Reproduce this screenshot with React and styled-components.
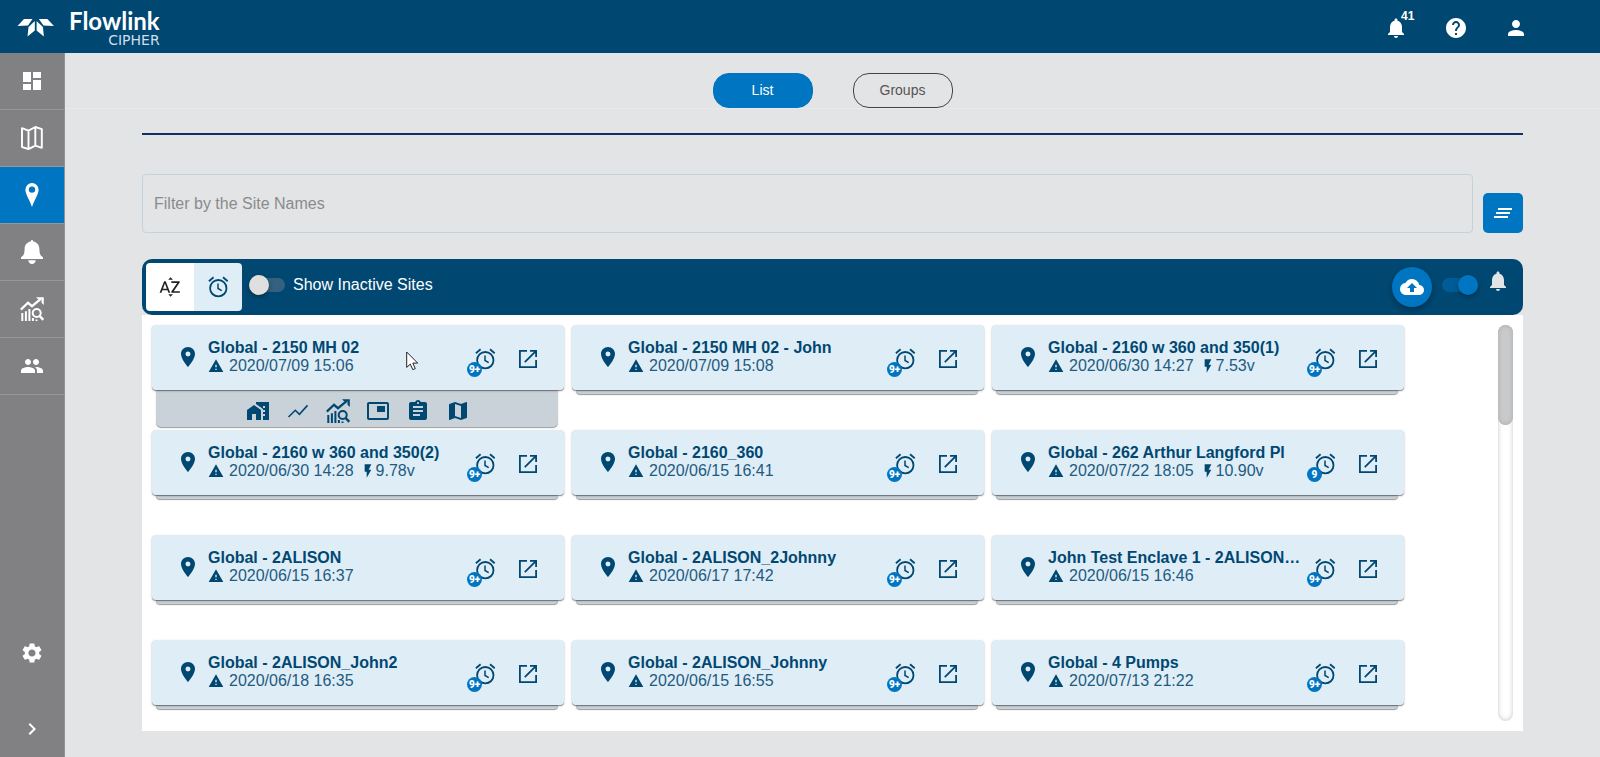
import React from 'react';
import styled, { createGlobalStyle, css } from 'styled-components';
import {
  MdAssignment, MdChevronRight, MdClearAll, MdCloudUpload, MdDashboard, MdHelp,
  MdLocationOn, MdMap, MdNotifications, MdPeople, MdPerson,
  MdPictureInPicture, MdSettings, MdSortByAlpha,
} from 'react-icons/md';

const color = {
  navy: '#004872',
  blue: '#0076c2',
  page: '#e3e4e6',
  side: '#818183',
  card: '#dfedf7',
  drawer: '#c8d2d8',
};

const GlobalStyle = createGlobalStyle`
  *, *::before, *::after { box-sizing: border-box; }
  body { margin: 0; background: ${color.page}; font-family: "Liberation Sans", Arial, sans-serif; font-size: 16px; }
  button, input { font: inherit; }
  svg { display: block; flex: none; }
`;

/* ---------- icons ---------- */

const AlarmIcon = () => (
  <svg width="24" height="24" viewBox="0 0 24 24" fill="none" stroke="currentColor" strokeWidth="1.8">
    <circle cx="12.3" cy="13.2" r="8.2" />
    <path d="M12 8.500v5l3.700 2.200" strokeWidth="1.500" />
    <path d="M2.900 6.200L7.600 2.300M21.700 6.200L17 2.300" />
  </svg>
);

const OpenIcon = () => (
  <svg width="24" height="24" viewBox="0 0 24 24" fill="none" stroke="currentColor" strokeWidth="1.8">
    <path d="M11 3.900H3.900v16.200h16.200V13" />
    <path d="M14 3.900h6.100V10M20.100 3.900L8.800 15.200" />
  </svg>
);

const AnalyticsIcon = () => (
  <svg width="24" height="24" viewBox="0 0 24 24" fill="none" stroke="currentColor">
    <path d="M.8 12.600L8 5.800l4 3.400 8.600-7" strokeWidth="2.200" />
    <path d="M16 .2h7.800V8l-2.300-2.300V2.500h-3.200z" fill="currentColor" stroke="none" />
    <path d="M2.300 16v8M5.900 14.300V24M9.400 12v12" strokeWidth="2" />
    <path d="M12.900 21v3M16.500 22.400V24" strokeWidth="2" />
    <circle cx="16.7" cy="16" r="4" strokeWidth="2" />
    <path d="M19.600 19l3.700 3.800" strokeWidth="2.400" />
  </svg>
);

const MapOutlineIcon = () => (
  <svg width="22" height="24" viewBox="0 0 22 24" fill="none" stroke="currentColor" strokeWidth="1.9" strokeLinejoin="round">
    <path d="M1 2.200l6.500 2.500L14.300 1l6.500 2.200v18.600l-6.500-2.200-6.800 3.500L1 21zM7.500 4.700v18.400M14.300 1v18.600" />
  </svg>
);

const SitePinIcon = () => (
  <svg width="14" height="24" viewBox="0 0 14 24" fill="currentColor" fillRule="evenodd">
    <path d="M7 0a6.600 6.600 0 0 0-6.600 6.600C.4 11.500 5.100 18 7 24c1.900-6 6.600-12.500 6.600-17.400A6.600 6.600 0 0 0 7 0zm0 3.400a3.200 3.200 0 1 1 0 6.400 3.200 3.200 0 0 1 0-6.400z" />
  </svg>
);

const AlertBellIcon = () => (
  <svg width="22" height="24" viewBox="0 0 22 24" fill="currentColor">
    <path d="M11 0c-.8 0-1.300.6-1.300 1.500C5.800 2.200 3.700 5 3.600 9c-.1 4.500-.6 6.400-3.600 8.200V19h22v-1.800c-3-1.800-3.500-3.700-3.600-8.200-.1-4-2.200-6.800-6.100-7.500C12.300.6 11.800 0 11 0zM7.300 20.300c.1 2.200 1.800 3.700 3.700 3.700s3.600-1.500 3.700-3.700z" />
  </svg>
);

const WarningIcon = () => (
  <svg width="16" height="16" viewBox="0 0 24 24" fill="currentColor">
    <path d="M1 21h22L12 2 1 21zm12-3h-2v-2h2v2zm0-4h-2v-4h2v4z" />
  </svg>
);

const BoltIcon = () => (
  <svg width="16" height="16" viewBox="0 0 24 24" fill="currentColor">
    <path d="M7 2v11h3v9l7-12h-4l4-8z" />
  </svg>
);

const HomeWorkIcon = () => (
  <svg width="24" height="24" viewBox="0 0 24 24" fill="currentColor" fillRule="evenodd">
    <path d="M1 11v10h5v-6h4v6h5V11L8 6z" />
    <path d="M10 3v1.970l7 5V11h2v2h-2v2h2v2h-2v4h6V3H10zm9 6h-2V7h2v2z" />
  </svg>
);

const TrendIcon = () => (
  <svg width="24" height="24" viewBox="0 0 24 24" fill="none" stroke="currentColor" strokeWidth="1.6">
    <path d="M2.500 18l6.800-6.700 4.100 4L21.500 6.400" />
  </svg>
);

const EmblemIcon = () => (
  <svg width="38" height="20" viewBox="0 0 38 20" fill="#fff">
    <path d="M.5 9L7 2h8.500L11 8.500z" />
    <path d="M36.900 9l-6.500-7h-8.500l4.500 6.500z" />
    <path d="M10.500 19.500l1-9.500 6.300-6v9.500z" />
    <path d="M26.900 19.500l-1-9.500-6.300-6v9.500z" />
  </svg>
);

const PointerIcon = () => (
  <svg width="13" height="20" viewBox="0 0 13 20" fill="#fff" stroke="#222" strokeWidth="1">
    <path d="M.7 1v15.400l3.600-3.300 2.500 5.600 2.500-1.100-2.500-5.500h4.900z" />
  </svg>
);

/* ---------- shell ---------- */

const Shell = styled.div`
  display: flex;
  flex-direction: column;
  height: 100vh;
  min-height: 500px;
`;

const IconButton = styled.button`
  display: inline-flex;
  align-items: center;
  justify-content: center;
  flex: none;
  width: 24px;
  height: 24px;
  padding: 0;
  border: 0;
  background: none;
  color: ${(p) => p.$tone || color.navy};
  position: relative;
  cursor: pointer;
`;

const Header = styled.header`
  display: flex;
  align-items: center;
  justify-content: space-between;
  flex: none;
  height: 53px;
  padding: 0 72px 0 17px;
  background: ${color.navy};
  color: #fff;
`;

const Brand = styled.a`
  display: flex;
  align-items: center;
  gap: 14px;
  color: #fff;
  text-decoration: none;
`;

const Wordmark = styled.span`
  display: flex;
  flex-direction: column;
  align-items: flex-end;
`;

const BrandName = styled.span`
  font: bold 24px/26px Lato, "Liberation Sans", sans-serif;
`;

const BrandSub = styled.span`
  font: 14px/12px "DejaVu Sans", sans-serif;
  color: #cfdfea;
`;

const HeaderActions = styled.nav`
  display: flex;
  gap: 36px;
  padding-top: 3px;
`;

const AlertCount = styled.span`
  position: absolute;
  left: 17px;
  top: -6px;
  font: bold 12px/12px "Liberation Sans", sans-serif;
`;

const Body = styled.div`
  display: flex;
  flex: 1;
  min-height: 0;
`;

const Sidebar = styled.nav`
  display: flex;
  flex-direction: column;
  flex: none;
  width: 65px;
  background: ${color.side};
  border-right: 1px solid #929294;
`;

const SideLink = styled.a`
  display: flex;
  align-items: center;
  justify-content: center;
  height: 57px;
  color: #fff;
  background: ${(p) => (p.$active ? color.blue : 'transparent')};
  border-bottom: ${(p) => (p.$plain ? '0' : '1px solid #979799')};
`;

const SideFooter = styled.div`
  display: flex;
  flex-direction: column;
  gap: 19px;
  margin-top: auto;
`;

const Main = styled.main`
  display: flex;
  flex-direction: column;
  flex: 1;
  min-width: 0;
`;

const Tabs = styled.div`
  display: flex;
  justify-content: center;
  gap: 40px;
  padding-top: 20px;
  border-bottom: 1px solid #e8e9eb;
`;

const Tab = styled.button`
  width: 100px;
  height: 35px;
  padding: 0 0 2px;
  border-radius: 16px;
  font-size: 14px;
  cursor: pointer;
  ${(p) => (p.$active
    ? css`background: ${color.blue}; border: 1px solid ${color.blue}; color: #fff;`
    : css`background: transparent; border: 1px solid #444; color: #555;`)}
`;

const Content = styled.div`
  display: flex;
  flex-direction: column;
  flex: 1;
  min-height: 0;
  padding: 24px 77px 26px;
`;

const Rule = styled.hr`
  width: 100%;
  height: 2px;
  margin: 0 0 39px;
  border: 0;
  background: #0f3264;
`;

const FilterRow = styled.form`
  display: flex;
  align-items: flex-end;
  gap: 10px;
  margin-bottom: 26px;
`;

const FilterInput = styled.input`
  flex: 1;
  min-width: 0;
  height: 59px;
  padding: 0 11px;
  border: 1px solid #c6d2da;
  border-radius: 4px;
  background: transparent;
  color: #333;
  &::placeholder { color: #8a8b8d; opacity: 1; }
`;

const FilterButton = styled(IconButton)`
  width: 40px;
  height: 40px;
  border-radius: 5px;
  background: ${color.blue};
`;

/* ---------- toolbar ---------- */

const Toolbar = styled.div`
  display: flex;
  align-items: center;
  justify-content: space-between;
  flex: none;
  height: 56px;
  padding: 0 13px 0 4px;
  border-radius: 10px;
  background: ${color.navy};
`;

const PanelFrame = styled.section`
  display: flex;
  flex-direction: column;
  flex: 1;
  min-height: 0;
  background: linear-gradient(${color.page} 56px, #fff 56px);
`;

const ToolGroup = styled.div`
  display: flex;
  align-items: center;
  gap: ${(p) => p.$gap}px;
`;

const SortGroup = styled.div`
  display: flex;
  border-radius: 4px;
  overflow: hidden;
`;

const SortButton = styled.button`
  display: flex;
  align-items: center;
  justify-content: center;
  width: 48px;
  height: 48px;
  padding: 0;
  border: 0;
  color: ${(p) => (p.$active ? color.navy : '#222')};
  background: ${(p) => (p.$active ? color.card : '#fff')};
  cursor: pointer;
`;

const Switch = styled.input.attrs({ type: 'checkbox' })`
  appearance: none;
  flex: none;
  display: flex;
  align-items: center;
  width: 36px;
  height: 14px;
  margin: 0;
  border-radius: 7px;
  background: #33617f;
  cursor: pointer;
  &::before {
    content: '';
    width: 20px;
    height: 20px;
    border-radius: 50%;
    background: #dfdfdf;
    box-shadow: 0 2px 5px rgba(0, 0, 0, 0.35);
  }
  &:checked { justify-content: flex-end; background: #005c97; }
  &:checked::before { background: ${color.blue}; }
`;

const SwitchLabel = styled.label`
  display: flex;
  align-items: center;
  gap: 8px;
  padding-bottom: 4px;
  color: #fff;
`;

const UploadButton = styled(IconButton)`
  width: 40px;
  height: 40px;
  border-radius: 50%;
  background: ${color.blue};
  box-shadow: 0 3px 6px rgba(0, 0, 0, 0.3);
`;

const BellSwitch = styled.label`
  display: flex;
  align-items: center;
  gap: 8px;
  padding-bottom: 4px;
  color: ${color.page};
  & > svg { margin-bottom: 8px; }
`;

/* ---------- site list ---------- */

const Panel = styled.div`
  display: flex;
  flex: 1;
  min-height: 0;
  padding: 0 10px 10px 0;
`;

const SiteGrid = styled.ul`
  display: grid;
  grid-template-columns: repeat(3, minmax(0, 1fr));
  grid-auto-rows: 103px;
  gap: 2px 8px;
  flex: 1;
  min-width: 0;
  margin: 0;
  padding: 10px 94px 0 10px;
  list-style: none;
  overflow-y: auto;
  scrollbar-width: none;
`;

const ScrollTrack = styled.div`
  flex: none;
  width: 15px;
  margin-top: 10px;
  border-radius: 8px;
  background: #fff;
  box-shadow: inset 0 0 5px #c4c4c4;
`;

const ScrollThumb = styled.div`
  height: 100px;
  border-radius: 8px;
  background: #c9cacc;
  box-shadow: inset 0 0 5px #aaabad;
`;

const Card = styled.article`
  display: flex;
  align-items: center;
  position: relative;
  z-index: 1;
  height: 65px;
  padding: 0 24px 2px;
  border-radius: 4px;
  background: ${color.card};
  color: ${color.navy};
  box-shadow: 0 1px 1px rgba(0, 0, 0, 0.4), 0 1px 3px rgba(0, 0, 0, 0.15);
`;

const Info = styled.div`
  flex: 1;
  min-width: 0;
  margin: 0 11px 0 8px;
`;

const SiteName = styled.h2`
  margin: 0;
  font-size: 16px;
  line-height: 18px;
  overflow: hidden;
  white-space: nowrap;
  text-overflow: ellipsis;
`;

const Reading = styled.div`
  display: flex;
  align-items: center;
  line-height: 18px;
  color: #1d5b81;
  & > svg { color: ${color.navy}; }
`;

const Stamp = styled.time`
  margin: 0 6px 0 5px;
`;

const CardActions = styled.div`
  display: flex;
  gap: 19px;
  padding-top: 5px;
`;

const Badge = styled.span`
  position: absolute;
  left: -6px;
  bottom: -6px;
  display: flex;
  align-items: center;
  justify-content: center;
  width: 15px;
  height: 15px;
  border-radius: 50%;
  background: ${color.blue};
  color: #fff;
  font: 900 10px/15px Roboto, "Liberation Sans", sans-serif;
`;

const Drawer = styled.div`
  display: flex;
  align-items: center;
  justify-content: center;
  gap: 16px;
  height: ${(p) => (p.$open ? 37 : 4)}px;
  margin: 0 6px 0 4px;
  padding: ${(p) => (p.$open ? '4px 0 0 2px' : 0)};
  border-radius: 0 0 5px 5px;
  background: ${color.drawer};
  box-shadow: 0 1px 1px rgba(0, 0, 0, 0.4);
`;

const Pointer = styled.div`
  position: fixed;
  left: 406px;
  top: 351px;
  z-index: 2;
  pointer-events: none;
`;

const sites = [
  { name: 'Global - 2150 MH 02', time: '2020/07/09 15:06', open: true },
  { name: 'Global - 2150 MH 02 - John', time: '2020/07/09 15:08' },
  { name: 'Global - 2160 w 360 and 350(1)', time: '2020/06/30 14:27', volts: '7.53v' },
  { name: 'Global - 2160 w 360 and 350(2)', time: '2020/06/30 14:28', volts: '9.78v' },
  { name: 'Global - 2160_360', time: '2020/06/15 16:41' },
  { name: 'Global - 262 Arthur Langford Pl', time: '2020/07/22 18:05', volts: '10.90v', alarms: '9' },
  { name: 'Global - 2ALISON', time: '2020/06/15 16:37' },
  { name: 'Global - 2ALISON_2Johnny', time: '2020/06/17 17:42' },
  { name: 'John Test Enclave 1 - 2ALISON…', time: '2020/06/15 16:46' },
  { name: 'Global - 2ALISON_John2', time: '2020/06/18 16:35' },
  { name: 'Global - 2ALISON_Johnny', time: '2020/06/15 16:55' },
  { name: 'Global - 4 Pumps', time: '2020/07/13 21:22' },
];

const drawerActions = [
  ['Site details', <HomeWorkIcon />],
  ['Trend', <TrendIcon />],
  ['Analytics', <AnalyticsIcon />],
  ['Snapshot', <MdPictureInPicture size={24} />],
  ['Report', <MdAssignment size={24} />],
  ['Map', <MdMap size={24} />],
];

function SiteItem({ site }) {
  return (
    <li>
      <Card>
        <MdLocationOn size={24} />
        <Info>
          <SiteName>{site.name}</SiteName>
          <Reading>
            <WarningIcon />
            <Stamp>{site.time}</Stamp>
            {site.volts && <><BoltIcon /><span>{site.volts}</span></>}
          </Reading>
        </Info>
        <CardActions>
          <IconButton aria-label="Alarms">
            <AlarmIcon />
            <Badge>{site.alarms || '9+'}</Badge>
          </IconButton>
          <IconButton aria-label="Open site"><OpenIcon /></IconButton>
        </CardActions>
      </Card>
      <Drawer $open={site.open}>
        {site.open && drawerActions.map(([label, icon]) => (
          <IconButton key={label} aria-label={label}>{icon}</IconButton>
        ))}
      </Drawer>
    </li>
  );
}

export default function App() {
  return (
    <Shell>
      <GlobalStyle />
      <Header>
        <Brand href="#home">
          <EmblemIcon />
          <Wordmark>
            <BrandName>Flowlink</BrandName>
            <BrandSub>CIPHER</BrandSub>
          </Wordmark>
        </Brand>
        <HeaderActions>
          <IconButton $tone="#fff" aria-label="Notifications">
            <MdNotifications size={24} />
            <AlertCount>41</AlertCount>
          </IconButton>
          <IconButton $tone="#fff" aria-label="Help"><MdHelp size={24} /></IconButton>
          <IconButton $tone="#fff" aria-label="Account"><MdPerson size={24} /></IconButton>
        </HeaderActions>
      </Header>
      <Body>
        <Sidebar>
          <SideLink href="#dashboard" aria-label="Dashboard"><MdDashboard size={24} /></SideLink>
          <SideLink href="#map" aria-label="Map"><MapOutlineIcon /></SideLink>
          <SideLink href="#sites" aria-label="Sites" $active><SitePinIcon /></SideLink>
          <SideLink href="#alerts" aria-label="Alerts"><AlertBellIcon /></SideLink>
          <SideLink href="#analytics" aria-label="Analytics"><AnalyticsIcon /></SideLink>
          <SideLink href="#people" aria-label="People"><MdPeople size={24} /></SideLink>
          <SideFooter>
            <SideLink href="#settings" aria-label="Settings" $plain><MdSettings size={24} /></SideLink>
            <SideLink href="#expand" aria-label="Expand menu" $plain><MdChevronRight size={24} /></SideLink>
          </SideFooter>
        </Sidebar>
        <Main>
          <Tabs>
            <Tab $active>List</Tab>
            <Tab>Groups</Tab>
          </Tabs>
          <Content>
            <Rule />
            <FilterRow onSubmit={(e) => e.preventDefault()}>
              <FilterInput type="text" aria-label="Filter by the Site Names" placeholder="Filter by the Site Names" />
              <FilterButton type="button" $tone="#fff" aria-label="Clear filter"><MdClearAll size={24} /></FilterButton>
            </FilterRow>
            <PanelFrame>
              <Toolbar>
                <ToolGroup $gap={7}>
                  <SortGroup>
                    <SortButton aria-label="Sort by name"><MdSortByAlpha size={24} /></SortButton>
                    <SortButton aria-label="Sort by alarms" $active><AlarmIcon /></SortButton>
                  </SortGroup>
                  <SwitchLabel>
                    <Switch />
                    Show Inactive Sites
                  </SwitchLabel>
                </ToolGroup>
                <ToolGroup $gap={10}>
                  <UploadButton $tone="#fff" aria-label="Upload"><MdCloudUpload size={24} /></UploadButton>
                  <BellSwitch>
                    <Switch defaultChecked aria-label="Alarm notifications" />
                    <MdNotifications size={24} />
                  </BellSwitch>
                </ToolGroup>
              </Toolbar>
              <Panel>
                <SiteGrid>
                  {sites.map((site) => <SiteItem key={site.name} site={site} />)}
                </SiteGrid>
                <ScrollTrack><ScrollThumb /></ScrollTrack>
              </Panel>
            </PanelFrame>
          </Content>
        </Main>
      </Body>
      <Pointer><PointerIcon /></Pointer>
    </Shell>
  );
}
